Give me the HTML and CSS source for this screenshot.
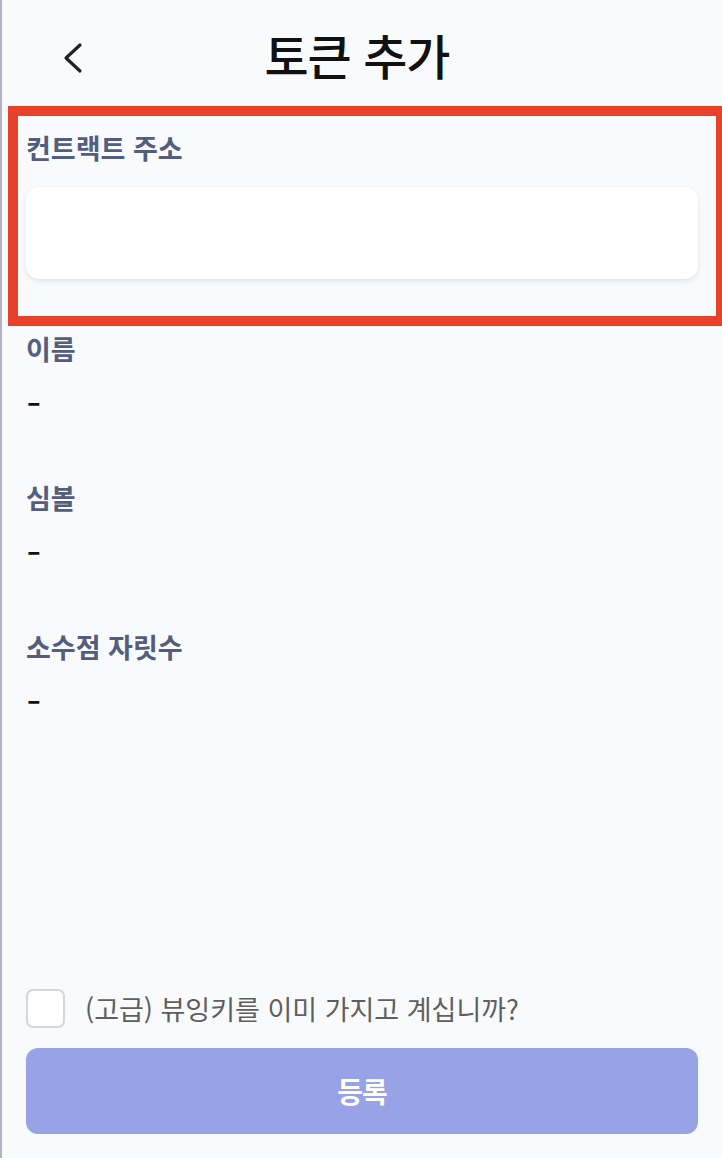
FILE: index.html
```html
<!DOCTYPE html>
<html lang="ko">

<head>
  <meta charset="utf-8">
  <title>토큰 추가</title>
  <link rel="stylesheet" href="styles.css">
</head>

<body>
  <div class="page">
    <section class="header">
      <button class="back-btn" aria-label="뒤로">
        <svg width="20" height="32" viewBox="0 0 20 32">
          <polyline points="17,3 3,16 17,29" fill="none" stroke="#222" stroke-width="3.2" stroke-linecap="round" stroke-linejoin="round" />
        </svg>
      </button>
      <h1 class="title">토큰 추가</h1>
      <span></span>
    </section>

    <div class="focus-box">
      <label class="field-label" for="contract">컨트랙트 주소</label>
      <input type="text" id="contract" class="input-box">
    </div>

    <div class="field">
      <p class="field-label">이름</p>
      <p class="field-value">-</p>
    </div>

    <div class="field">
      <p class="field-label">심볼</p>
      <p class="field-value">-</p>
    </div>

    <div class="field">
      <p class="field-label">소수점 자릿수</p>
      <p class="field-value">-</p>
    </div>

    <div class="bottom">
      <label class="check-row">
        <input type="checkbox" class="check-box">
        <span class="check-text">(고급) 뷰잉키를 이미 가지고 계십니까?</span>
      </label>
      <button class="save-btn">등록</button>
    </div>
  </div>
</body>

</html>
```

FILE: styles.css
```css
* {
  font-family: "Noto Sans CJK KR", "Noto Sans", sans-serif;
  box-sizing: border-box;
}

body {
  margin: 0;
  background: linear-gradient(to right, #b3b3c6 0 2px, #f9fafc 2px);
}

.page {
  display: flex;
  flex-direction: column;
  height: 100vh;
}

.header {
  display: grid;
  grid-template-columns: 1fr auto 1fr;
  align-items: center;
  height: 106px;
  padding: 2px 8px 0 0;
}

.back-btn {
  justify-self: start;
  margin-left: 63px;
  margin-top: 8px;
  padding: 0;
  background: none;
  border: none;
  cursor: pointer;
  display: flex;
}

.title {
  margin: 0;
  font-size: 48px;
  font-weight: 500;
  letter-spacing: -1px;
  color: #111;
}

.focus-box {
  display: flex;
  flex-direction: column;
  margin-left: 8px;
  border: 10px solid #e9402a;
  border-right-width: 6px;
  padding: 15px 18px 37px 8px;
}

.field-label {
  margin: 0;
  font-size: 27px;
  line-height: 34px;
  font-weight: 700;
  color: #535d7e;
}

.input-box {
  margin-top: 22px;
  height: 92px;
  border: none;
  border-radius: 13px;
  background-color: white;
  box-shadow: 0 2px 4px rgba(40, 50, 90, 0.12);
  padding: 0 20px;
  font-size: 24px;
  outline: none;
}

.field {
  padding: 6px 24px 0 26px;
  margin-bottom: 55px;
}

.field-value {
  margin: 20px 0 0 0;
  font-family: Inter, "Noto Sans", sans-serif;
  font-size: 34px;
  font-weight: 400;
  line-height: 34px;
  color: #111;
}

.bottom {
  margin-top: auto;
  padding: 0 24px 24px 26px;
}

.check-row {
  display: flex;
  align-items: center;
  gap: 20px;
  cursor: pointer;
}

.check-box {
  appearance: none;
  margin: 0;
  width: 39px;
  height: 39px;
  border: 2px solid #d2d6dd;
  border-radius: 7px;
  background: white;
}

.check-text {
  font-size: 27px;
  color: #5f5f5f;
}

.save-btn {
  display: block;
  width: 100%;
  height: 86px;
  margin-top: 20px;
  border: none;
  border-radius: 12px;
  background-color: #97a2e7;
  color: white;
  font-size: 28px;
  font-weight: 700;
  letter-spacing: -1px;
  cursor: pointer;
}
```
